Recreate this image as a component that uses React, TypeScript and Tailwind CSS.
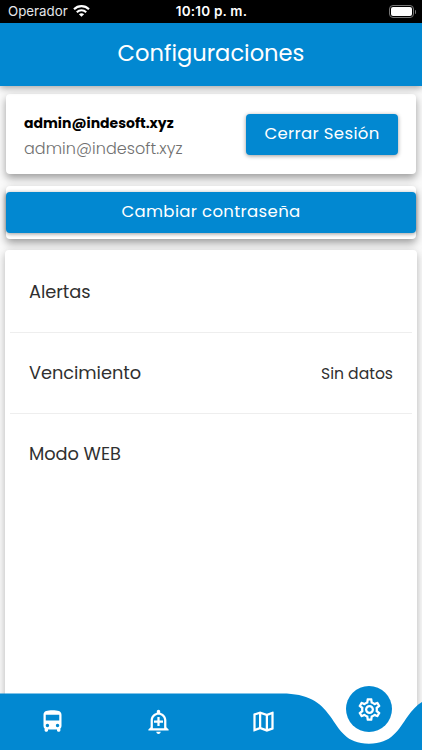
import { MdDirectionsBus, MdOutlineAddAlert, MdOutlineMap, MdOutlineSettings } from 'react-icons/md';

const settings = [
  { label: 'Alertas', value: '' },
  { label: 'Vencimiento', value: 'Sin datos' },
  { label: 'Modo WEB', value: '' },
];

function StatusBar() {
  return (
    <div className="flex h-[23px] shrink-0 items-center bg-black pr-[6px] pl-2 font-['Inter',sans-serif] text-[13.5px] leading-none text-white">
      <div className="flex flex-1 items-center gap-[5px]">
        <span className="text-[13.3px] text-gray-200">Operador</span>
        <svg width="17" height="12" viewBox="0 0 17 12" fill="none" stroke="white" strokeWidth="2.1">
          <path d="M1 4.3C5.2 0.1 11.8 0.1 16 4.3" />
          <path d="M3.8 7.2C6.4 4.6 10.6 4.6 13.2 7.2" />
          <path d="M8.5 11.8L5.9 9.2C7.3 7.9 9.7 7.9 11.1 9.2Z" fill="white" stroke="none" />
        </svg>
      </div>
      <span className="pt-px pr-px font-semibold tracking-[0.2px]">10:10 p. m.</span>
      <div className="flex flex-1 items-center justify-end">
        <div className="h-[13px] w-[25px] rounded-[4px] border border-[#777] p-px">
          <div className="h-full w-full rounded-[2px] bg-white" />
        </div>
        <div className="ml-px h-[4px] w-px rounded-r bg-[#777]" />
      </div>
    </div>
  );
}

function BottomNav() {
  return (
    <nav className="relative z-10 grid h-[57px] shrink-0 grid-cols-4 text-white">
      <svg className="absolute inset-0" width="422" height="57" viewBox="0 0 422 57">
        <path
          d="M0 0.5H282C308 0.5 320 9 330 23C340 37 346 50.7 369 50.7C392 50.7 398 37 408 23C412 17 417 12 422 9V57H0Z"
          fill="#0288d1"
        />
      </svg>
      <button className="relative flex items-center justify-center" aria-label="Unidades">
        <MdDirectionsBus size={27} />
      </button>
      <button className="relative flex items-center justify-center" aria-label="Alertas">
        <MdOutlineAddAlert size={27} />
      </button>
      <button className="relative flex items-center justify-center" aria-label="Mapa">
        <MdOutlineMap size={27} />
      </button>
      <button className="relative -top-[7px] flex h-[46px] w-[46px] items-center justify-center justify-self-center rounded-full bg-[#0288d1]" aria-label="Configuraciones">
        <MdOutlineSettings size={27} />
      </button>
    </nav>
  );
}

export default function App() {
  return (
    <div className="flex h-[750px] w-[422px] flex-col overflow-hidden bg-[#fafafa] font-['Poppins','Inter',sans-serif]">
      <StatusBar />
      <header className="relative flex h-[63px] shrink-0 items-center justify-center bg-[#0288d1] pb-px text-white shadow-[0_2px_7px_rgba(0,0,0,0.35)]">
        <h1 className="text-[22.6px]">Configuraciones</h1>
      </header>

      <main className="flex min-h-0 flex-1 flex-col px-[5px] pt-2">
        <section className="mx-px flex h-[80px] shrink-0 items-center justify-between rounded-[4px] bg-white pr-[18px] pl-[18px] shadow-[0_4px_9px_rgba(0,0,0,0.38)]">
          <div className="pt-[3px]">
            <p className="text-[14px] leading-[25px] font-bold text-black">admin@indesoft.xyz</p>
            <p className="text-[16px] leading-[25px] font-light text-[#707070] tracking-[0.05px]">admin@indesoft.xyz</p>
          </div>
          <button className="h-[41px] w-[152px] rounded-[4px] bg-[#0288d1] text-[16.5px] tracking-[0.35px] text-white shadow-[0_1px_4px_rgba(0,0,0,0.4)]">
            Cerrar Sesión
          </button>
        </section>

        <section className="mx-px mt-3 h-[53px] shrink-0 rounded-[4px] bg-white pt-[6px] shadow-[0_4px_9px_rgba(0,0,0,0.38)]">
          <button className="h-[41px] w-full rounded-[4px] bg-[#0288d1] text-[16.5px] tracking-[0.35px] text-white shadow-[0_1px_4px_rgba(0,0,0,0.4)]">
            Cambiar contraseña
          </button>
        </section>

        <section className="-mb-[70px] mt-[11px] flex-1 rounded-[4px] bg-white px-[5px] pt-[2px] shadow-[0_3px_9px_rgba(0,0,0,0.28)]">
          <ul className="divide-y divide-[#eeeeee]">
            {settings.map((item) => (
              <li key={item.label} className="flex h-[81px] items-center justify-between pr-[19px] pl-[19px] text-[#303030]">
                <span className="text-[17.8px] tracking-[-0.05px]">{item.label}</span>
                {item.value && <span className="pt-px text-[15.6px]">{item.value}</span>}
              </li>
            ))}
          </ul>
        </section>
      </main>

      <BottomNav />
    </div>
  );
}
